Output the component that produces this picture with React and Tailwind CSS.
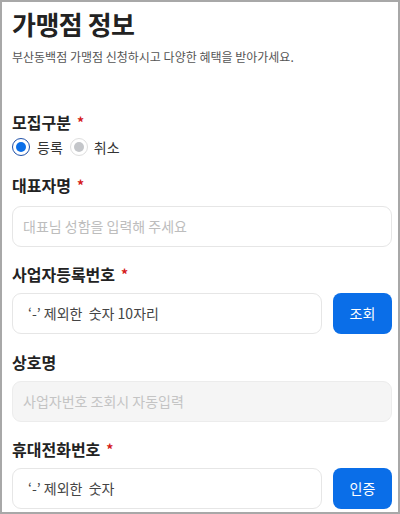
import React from "react";

function Label({ children, required }) {
  return (
    <div className="flex items-center h-[22px] text-[16px] font-bold leading-[22px] text-[#222]">
      <span>{children}</span>
      {required && <span className="ml-[6px] text-[#d51a1a] text-[14px]">*</span>}
    </div>
  );
}

export default function App() {
  return (
    <div
      className="w-[400px] h-[514px] overflow-hidden border-2 border-[#a8a8a8] bg-white"
      style={{ fontFamily: '"Noto Sans CJK KR", "Noto Sans", sans-serif' }}
    >
      <div className="pl-[10px] pr-[6px] pt-[2px]">
        <h1 className="text-[26px] font-bold leading-[40px] text-[#222] tracking-[-0.5px]">가맹점 정보</h1>
        <p className="mt-[4px] text-[12px] leading-[18px] text-[#555]">부산동백점 가맹점 신청하시고 다양한 혜택을 받아가세요.</p>

        <div className="mt-[45px]">
          <Label required>모집구분</Label>
          <div className="mt-[3px] flex items-center h-[22px] text-[14px] text-[#333]">
            <span className="w-[18px] h-[18px] rounded-full border-[1.5px] border-[#1d4fa8] flex items-center justify-center">
              <span className="w-[10px] h-[10px] rounded-full bg-[#0a6ee8]" />
            </span>
            <span className="ml-[7px]">등록</span>
            <span className="ml-[7px] w-[18px] h-[18px] rounded-full border border-[#dedede] flex items-center justify-center">
              <span className="w-[10px] h-[10px] rounded-full bg-[#c4c6ca]" />
            </span>
            <span className="ml-[6px]">취소</span>
          </div>
        </div>

        <div className="mt-[16px]">
          <Label required>대표자명</Label>
          <div className="mt-[10px] h-[41px] rounded-[9px] border border-[#e6e6e6] flex items-center px-[10px] text-[14px] text-[#bdbdbd]">
            대표님 성함을 입력해 주세요
          </div>
        </div>

        <div className="mt-[16px]">
          <Label required>사업자등록번호</Label>
          <div className="mt-[8px] flex gap-[11px]">
            <div className="flex-1 h-[41px] rounded-[9px] border border-[#e6e6e6] flex items-center pl-[15px] text-[14px] text-[#444]">
              ‘-’ 제외한&nbsp; 숫자 10자리
            </div>
            <button className="w-[59px] h-[41px] rounded-[8px] bg-[#0a6ee8] text-white text-[14px]">조회</button>
          </div>
        </div>

        <div className="mt-[17px]">
          <Label>상호명</Label>
          <div className="mt-[8px] h-[41px] rounded-[9px] border border-[#ececec] bg-[#f5f5f5] flex items-center px-[10px] text-[14px] text-[#c4c4c4]">
            사업자번호 조회시 자동입력
          </div>
        </div>

        <div className="mt-[16px]">
          <Label required>휴대전화번호</Label>
          <div className="mt-[8px] flex gap-[11px]">
            <div className="flex-1 h-[41px] rounded-[9px] border border-[#e6e6e6] flex items-center pl-[15px] text-[14px] text-[#444]">
              ‘-’ 제외한&nbsp; 숫자
            </div>
            <button className="w-[59px] h-[41px] rounded-[8px] bg-[#0a6ee8] text-white text-[14px]">인증</button>
          </div>
        </div>
      </div>
    </div>
  );
}
